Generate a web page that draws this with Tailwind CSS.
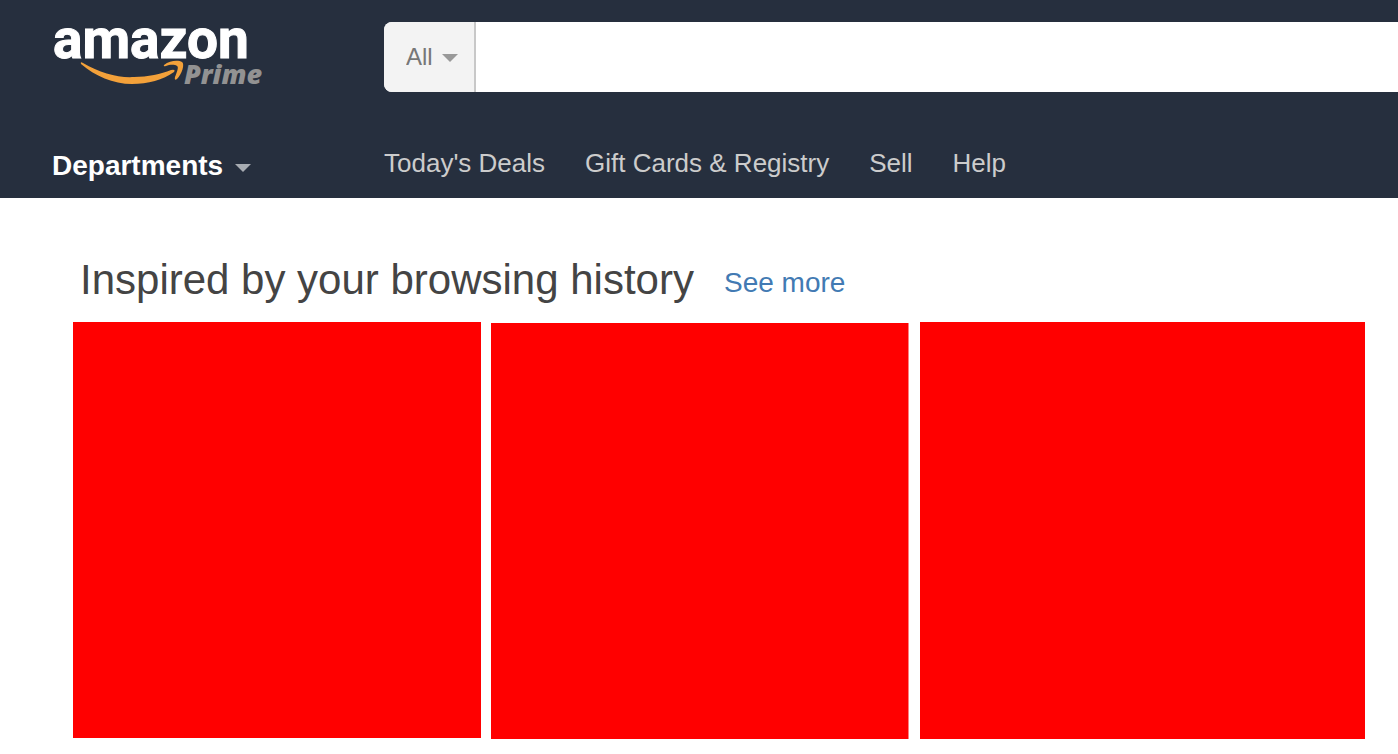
<!DOCTYPE html>
<html lang="en">
<head>
<meta charset="utf-8">
<meta name="viewport" content="width=device-width, initial-scale=1">
<title>Amazon</title>
<script src="https://cdn.jsdelivr.net/npm/@tailwindcss/browser@4"></script>
</head>
<body class="bg-white font-['Liberation_Sans',Arial,sans-serif] overflow-x-hidden">
<header class="bg-[#262f3e] pl-[52px] pt-[22px] pb-4">
  <div class="flex items-start">
    <a href="#" aria-label="Amazon Prime" class="block w-[332px] shrink-0">
      <svg class="block overflow-visible" width="216" height="70" viewBox="0 0 216 70">
        <text x="1" y="36" font-family="Roboto,sans-serif" font-weight="700" font-size="55" fill="#fff" stroke="#fff" stroke-width="1">amazon</text>
        <path d="M31 41C48 51 66 56 82 55C96 55 109 52 119 48Q124 47 122 50C111 58 96 62 80 62C61 62 43 54 29 42Q28 39 31 41Z" fill="#f3a13a"/>
        <path d="M112 43C118 38 127 38 130 40C133 42 130 52 125 57Q122 59 123 55C125 50 127 45 125 44C122 42 117 43 114 44Q111 45 112 43Z" fill="#f3a13a"/>
        <text x="132" y="62" font-family="'Open Sans',sans-serif" font-weight="800" font-style="italic" font-size="27" fill="#929292">Prime</text>
      </svg>
    </a>
    <form class="flex h-[70px] grow overflow-hidden rounded-l-lg bg-white">
      <div class="relative flex w-[92px] shrink-0 border-r-2 border-[#c8c8c8] bg-[#f3f3f3]">
        <select aria-label="Search category" class="w-full appearance-none pl-[22px] text-2xl text-[#777777]"><option>All</option></select>
        <svg class="pointer-events-none absolute right-4 top-8" width="16" height="8" viewBox="0 0 16 8"><path d="M0 0H16L8 8Z" fill="#999"/></svg>
      </div>
      <input type="text" aria-label="Search" class="min-w-0 grow px-4 text-2xl outline-none">
    </form>
  </div>
  <nav class="mt-[52px] flex items-start text-[26px] leading-[38px] text-[#cccccc]">
    <button type="button" class="flex w-[332px] shrink-0 items-center gap-3 pt-[6px] text-left text-[28px] leading-8 font-bold text-white">Departments
      <svg class="mt-1" width="16" height="8" viewBox="0 0 16 8"><path d="M0 0H16L8 8Z" fill="#a7acb2"/></svg>
    </button>
    <div class="flex gap-10 whitespace-nowrap">
      <a href="#">Today's Deals</a>
      <a href="#">Gift Cards &amp; Registry</a>
      <a href="#">Sell</a>
      <a href="#">Help</a>
    </div>
  </nav>
</header>
<main class="pl-[73px] pr-[33px] pt-14">
  <div class="flex items-center gap-[30px] pl-[7px] whitespace-nowrap">
    <h1 class="text-[42px] leading-[52px] text-[#444444]">Inspired by your browsing history</h1>
    <a href="#" class="pt-[6px] text-[28px] leading-8 text-[#427ab3]">See more</a>
  </div>
  <div class="mt-4 grid grid-cols-[408fr_419fr_445fr] gap-[10px]">
    <div class="h-[416px] bg-[#ff0000]"></div>
    <div class="mt-px mr-px h-[416px] border-r border-[#ff8080] bg-[#ff0000]"></div>
    <div class="h-[417px] bg-[#ff0000]"></div>
  </div>
</main>
</body>
</html>
